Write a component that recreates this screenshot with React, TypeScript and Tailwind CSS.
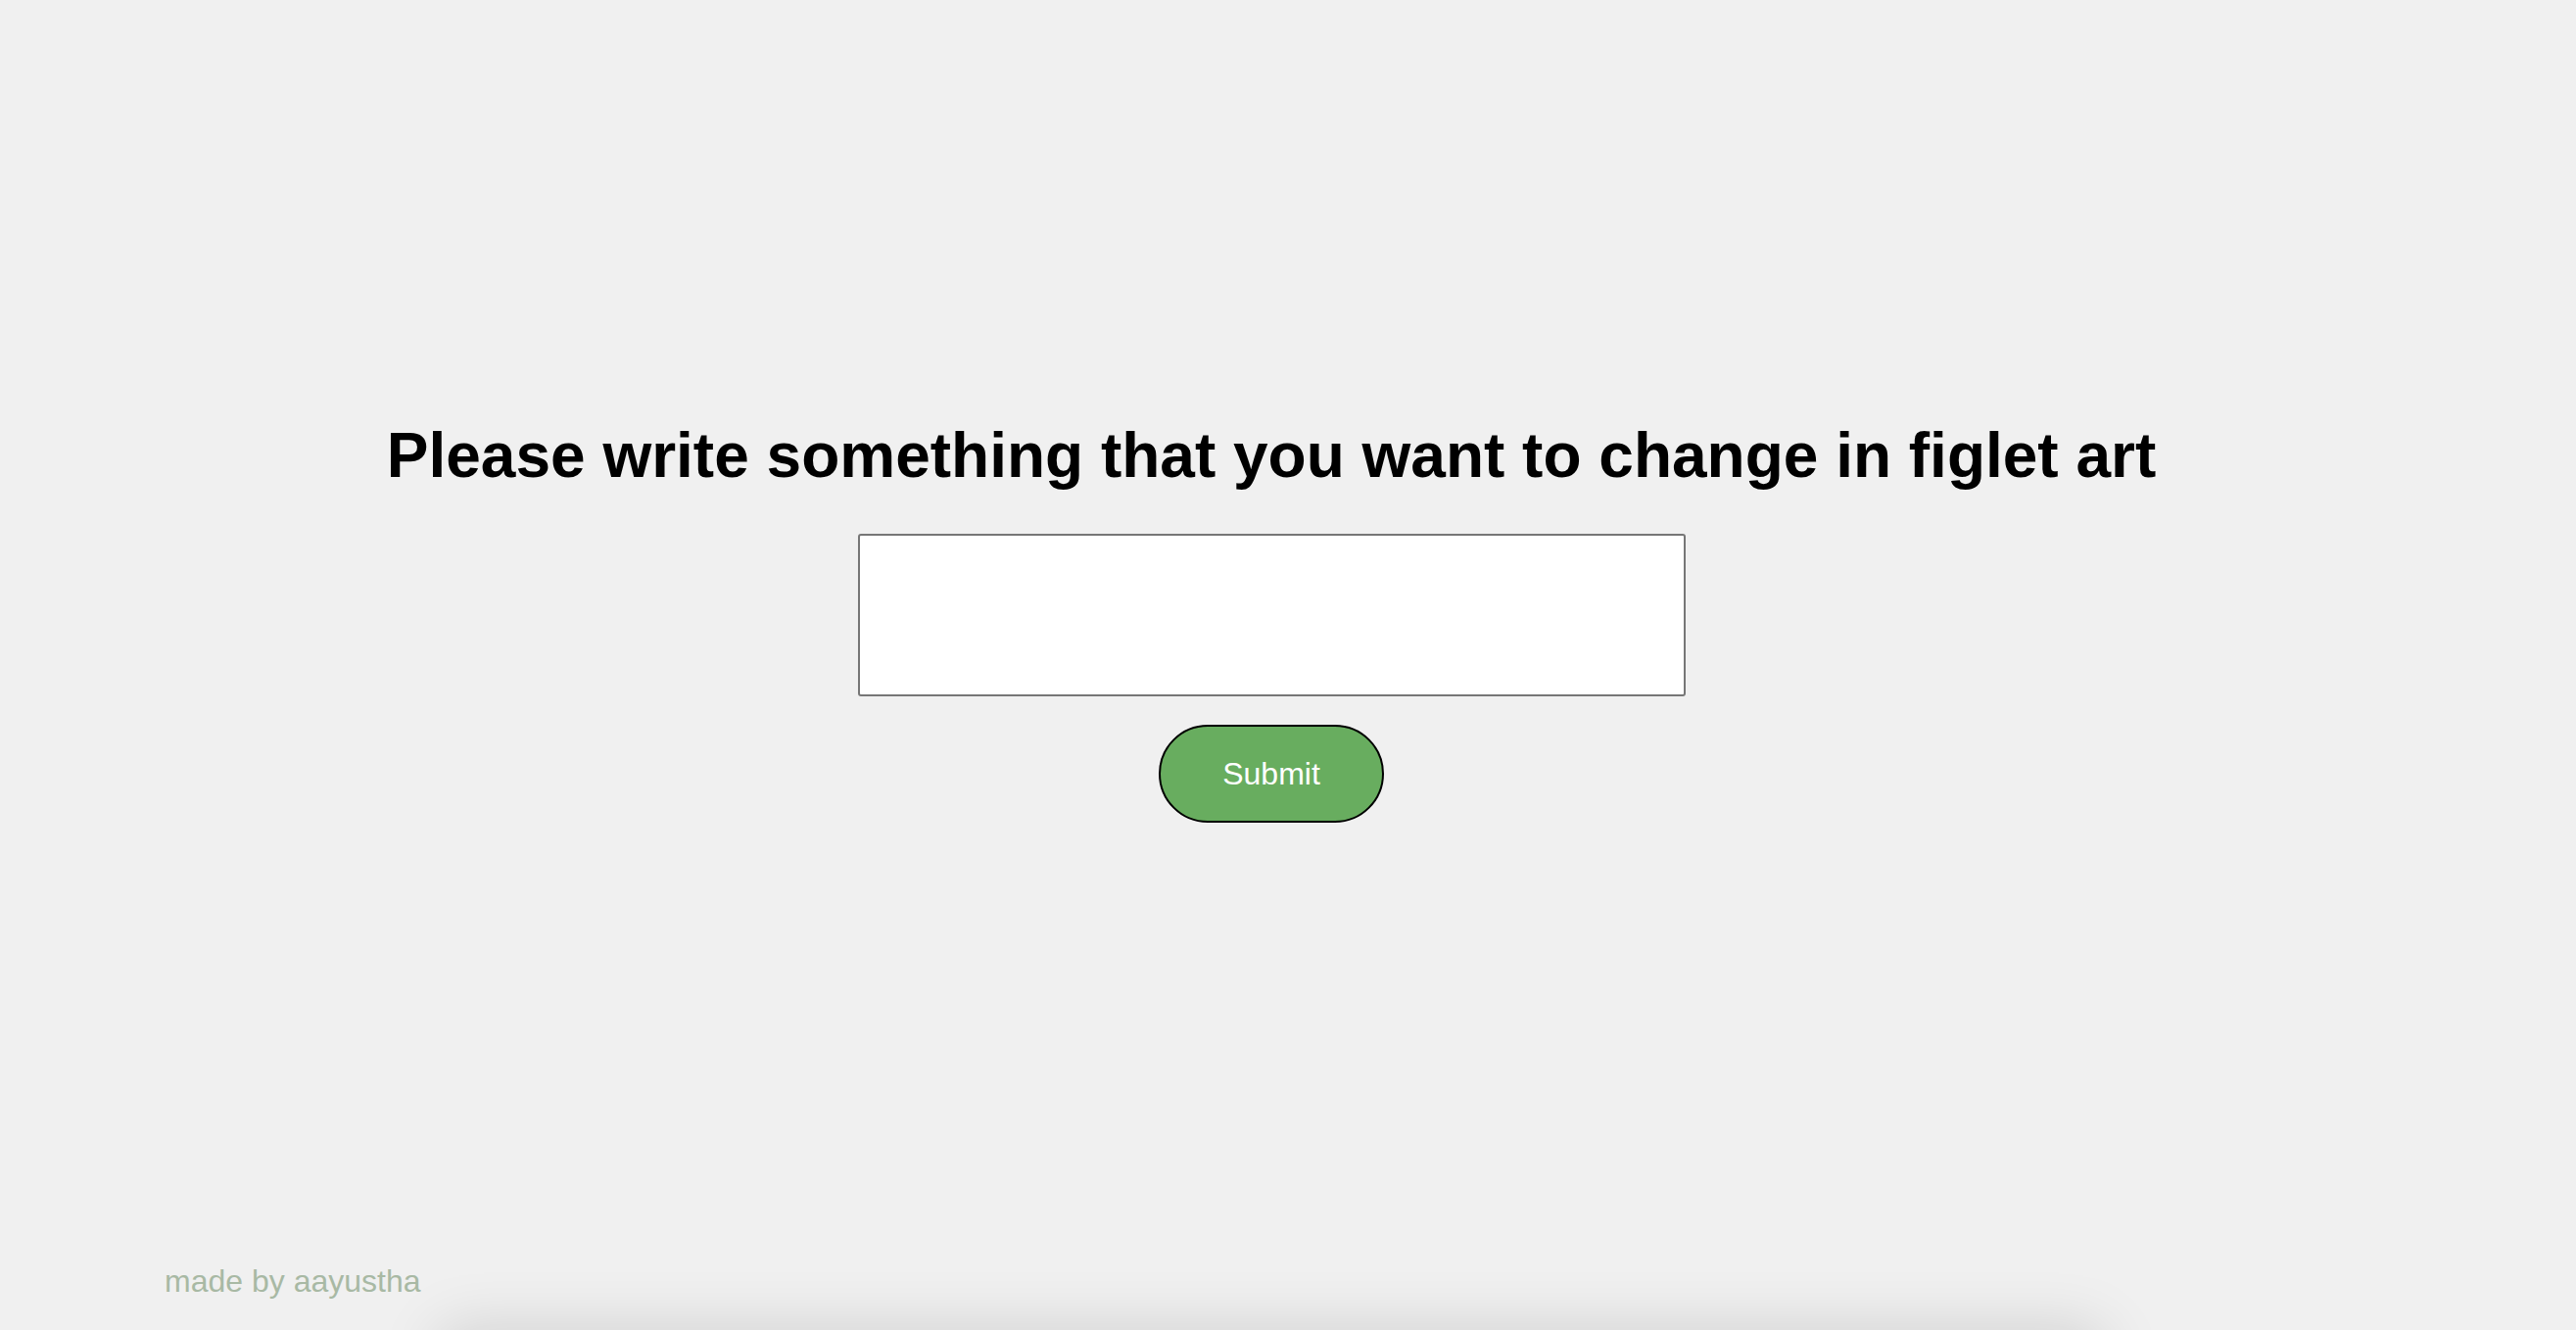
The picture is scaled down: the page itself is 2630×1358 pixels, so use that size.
import { useState } from "react";

export default function App() {
  const [text, setText] = useState("");

  return (
    <div
      className="relative h-screen overflow-hidden bg-[#f0f0f0] flex flex-col"
      style={{ fontFamily: '"Liberation Sans", Arial, sans-serif' }}
    >
      <main className="flex-1 flex flex-col items-center pt-[428px] pr-[34px]">
        <h1 className="text-[64px] leading-[74px] font-bold text-black">
          Please write something that you want to change in figlet art
        </h1>
        <textarea
          value={text}
          onChange={(e) => setText(e.target.value)}
          className="mt-[43px] w-[845px] h-[166px] bg-white border-2 border-[#767676] rounded-[3px] resize-none outline-none p-2 text-2xl"
        />
        <button
          type="button"
          className="mt-[29px] w-[230px] h-[100px] rounded-full bg-[#68ad5f] border-2 border-black text-white text-[32px]"
        >
          Submit
        </button>
      </main>

      <footer className="pl-[168px] pb-[31px] text-[32px] leading-[37px] text-[#a8b9a4]">
        made by aayustha
      </footer>

      {/* shadow of the panel sitting just under the fold */}
      <div className="pointer-events-none absolute left-[450px] top-full w-[1696px] h-[200px] bg-[#f0f0f0] shadow-[0_0_60px_rgba(0,0,0,0.14)]" />
    </div>
  );
}
